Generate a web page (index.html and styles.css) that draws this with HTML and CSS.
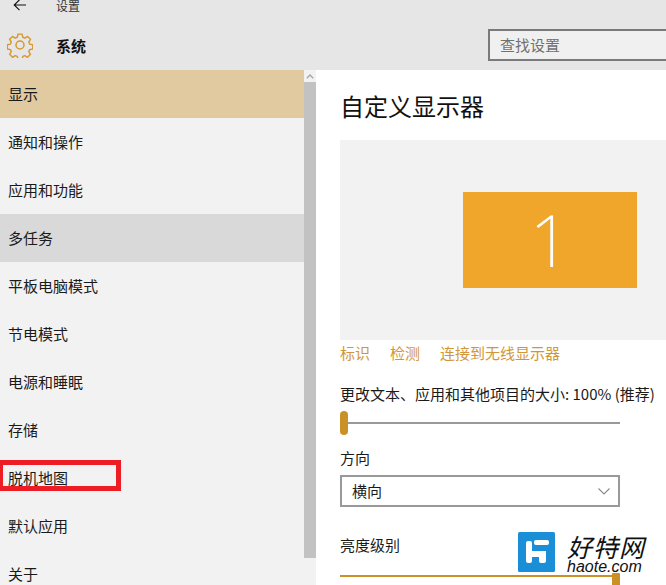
FILE: index.html
```html
<!DOCTYPE html>
<html lang="zh-CN">
<head>
    <meta charset="UTF-8">
    <meta name="viewport" content="width=device-width, initial-scale=1.0">
    <title>设置</title>
    <link rel="stylesheet" href="styles.css">
</head>
<body>
    <header class="header">
        <div class="titlebar">
            <svg class="back" width="14" height="12" viewBox="0 0 14 12"><path d="M13 6H1.500M6.500 .8 1.200 6l5.300 5.200" fill="none" stroke="#111" stroke-width="1.100"/></svg>
            <span class="app-name">设置</span>
        </div>
        <div class="section-bar">
            <svg class="gear" width="26" height="26" viewBox="0 0 26 26">
                <path d="M10.800 1.500h4.400l.7 3.300 2.200.9 2.800-1.800 3.100 3.100-1.800 2.800.9 2.200 3.300.7v4.400l-3.300.7-.9 2.200 1.800 2.800-3.100 3.100-2.800-1.800-2.200.9-.7 3.300h-4.400l-.7-3.300-2.200-.9-2.800 1.800-3.100-3.100 1.800-2.800-.9-2.200-3.300-.7v-4.400l3.300-.7.9-2.200-1.800-2.800 3.100-3.100 2.800 1.800 2.200-.9z" transform="translate(.7 .7) scale(.95)" fill="none" stroke="#d8982f" stroke-width="1.500" stroke-linejoin="round"/>
                <circle cx="13" cy="13" r="4" fill="none" stroke="#d8982f" stroke-width="1.500"/>
            </svg>
            <span class="section-name">系统</span>
            <div class="search">查找设置</div>
        </div>
    </header>

    <div class="content">
        <nav class="sidebar">
            <div class="nav-list">
                <div class="nav-item selected">显示</div>
                <div class="nav-item">通知和操作</div>
                <div class="nav-item">应用和功能</div>
                <div class="nav-item hover">多任务</div>
                <div class="nav-item">平板电脑模式</div>
                <div class="nav-item">节电模式</div>
                <div class="nav-item">电源和睡眠</div>
                <div class="nav-item">存储</div>
                <div class="nav-item marked">脱机地图</div>
                <div class="nav-item">默认应用</div>
                <div class="nav-item">关于</div>
            </div>
            <div class="scrollbar">
                <div class="scroll-arrow">
                    <svg width="8" height="5" viewBox="0 0 8 5"><path d="M.8 4.200 4 1l3.200 3.200" fill="none" stroke="#a6a6a6" stroke-width="1.300"/></svg>
                </div>
                <div class="scroll-thumb"></div>
            </div>
        </nav>

        <main class="main">
            <h1 class="page-title">自定义显示器</h1>
            <div class="preview">
                <div class="monitor">1</div>
            </div>
            <div class="links">
                <a>标识</a>
                <a>检测</a>
                <a>连接到无线显示器</a>
            </div>
            <div class="label scale-label">更改文本、应用和其他项目的大小: 100% (推荐)</div>
            <div class="slider">
                <div class="thumb round"></div>
            </div>
            <div class="label orient-label">方向</div>
            <div class="select">
                <span class="select-value">横向</span>
                <svg width="12" height="7" viewBox="0 0 12 7"><path d="M.5.5 6 6l5.500-5.500" fill="none" stroke="#8a8a8a" stroke-width="1.100"/></svg>
            </div>
            <div class="label bright-label">亮度级别</div>
            <div class="slider filled">
                <div class="thumb square"></div>
            </div>
        </main>
    </div>

    <div class="watermark">
        <svg width="37" height="40" viewBox="0 0 37 40">
            <rect width="37" height="40" rx="1.500" fill="#1a8fd8"/>
            <rect x="8" y="9" width="6" height="22" rx="2" fill="#fff"/>
            <rect x="8" y="19" width="20" height="6" fill="#fff"/>
            <rect x="21" y="19" width="7" height="12" rx="2" fill="#fff"/>
            <rect x="16" y="8" width="15" height="5" rx="2" fill="#fff"/>
        </svg>
        <div class="wm-text">
            <div class="wm-cn">好特网</div>
            <div class="wm-en">haote.com</div>
        </div>
    </div>
</body>
</html>
```

FILE: styles.css
```css
html, body {
    margin: 0;
    height: 585px;
    overflow: hidden;
}
body {
    font-family: "Noto Sans CJK SC", "Liberation Sans", sans-serif;
    font-size: 15px;
    color: #1a1a1a;
    background-color: #fff;
    position: relative;
}
.header {
    height: 70px;
    background-color: #e6e6e6;
    overflow: hidden;
}
.titlebar {
    height: 24px;
    margin-top: -7px;
    display: flex;
    align-items: center;
    font-size: 12px;
}
.back {
    margin-left: 13px;
}
.app-name {
    margin-left: 29px;
    color: #333;
}
.section-bar {
    height: 46px;
    display: flex;
    align-items: center;
    padding-top: 9px;
    box-sizing: border-box;
}
.gear {
    margin-left: 7px;
}
.section-name {
    margin-left: 23px;
    margin-top: 2px;
    font-weight: bold;
    color: #111;
}
.search {
    margin-left: auto;
    width: 178px;
    height: 32px;
    box-sizing: border-box;
    border: 2px solid #7a7a7a;
    border-right: none;
    background-color: #f0f0f0;
    color: #707070;
    line-height: 28px;
    padding-left: 10px;
}
.content {
    display: flex;
    height: 515px;
}
.sidebar {
    width: 316px;
    display: flex;
    flex-shrink: 0;
}
.nav-list {
    width: 304px;
    background-color: #f2f2f2;
}
.nav-item {
    height: 48px;
    line-height: 47px;
    padding-left: 8px;
}
.nav-item.selected {
    background-color: #e2caa0;
}
.nav-item.hover {
    background-color: #d9d9d9;
}
.nav-item.marked {
    position: relative;
}
/* red annotation box, drawn on top of the row */
.nav-item.marked::after {
    content: "";
    position: absolute;
    left: 0;
    top: 6px;
    width: 121px;
    height: 31px;
    box-sizing: border-box;
    border: 5px solid #ee1c25;
    border-left-width: 3px;
}
.scrollbar {
    width: 12px;
    background-color: #f2f2f2;
}
.scroll-arrow {
    height: 12px;
    display: flex;
    align-items: center;
    justify-content: center;
}
.scroll-thumb {
    height: 476px;
    background-color: #c2c2c2;
}
.main {
    flex: 1;
    padding-left: 24px;
    min-width: 0;
}
.page-title {
    margin: 0;
    font-size: 24px;
    font-weight: normal;
    line-height: 34px;
    padding-top: 19px;
    color: #111;
}
.preview {
    margin-top: 17px;
    height: 200px;
    background-color: #f2f2f2;
    padding: 52px 0 0 123px;
    box-sizing: border-box;
}
.monitor {
    width: 174px;
    height: 96px;
    background-color: #f0a62a;
    color: #fff;
    font-family: "Noto Sans", sans-serif;
    font-weight: 200;
    font-size: 72px;
    line-height: 94px;
    text-align: center;
}
.links {
    display: flex;
    gap: 20px;
    margin-top: 3px;
    line-height: 20px;
    color: #d0973a;
}
.label {
    line-height: 20px;
    white-space: nowrap;
}
.scale-label {
    margin-top: 21px;
}
.slider {
    position: relative;
    width: 280px;
    height: 2px;
    background-color: #999;
    margin-top: 18px;
}
.thumb {
    position: absolute;
    background-color: #cc9028;
}
.thumb.round {
    left: 0;
    top: -11px;
    width: 8px;
    height: 24px;
    border-radius: 4px;
}
.orient-label {
    margin-top: 24px;
}
.select {
    width: 280px;
    height: 32px;
    box-sizing: border-box;
    border: 2px solid #999;
    margin-top: 7px;
    padding: 0 8px 0 10px;
    display: flex;
    align-items: center;
    justify-content: space-between;
}
.select-value {
    padding-bottom: 2px;
}
.bright-label {
    margin-top: 28px;
}
.slider.filled {
    background-color: #cc9028;
    margin-top: 20px;
}
.thumb.square {
    right: 0;
    top: -2px;
    width: 8px;
    height: 14px;
    border-radius: 1px;
}
.watermark {
    position: absolute;
    left: 518px;
    top: 532px;
    display: flex;
    align-items: flex-start;
    gap: 12px;
}
.wm-text {
    color: #111;
}
.wm-cn {
    font-size: 25px;
    line-height: 28px;
    font-style: italic;
    letter-spacing: 1px;
    white-space: nowrap;
}
.wm-en {
    font-family: "Liberation Sans", sans-serif;
    font-style: italic;
    font-size: 16px;
    line-height: 14px;
    white-space: nowrap;
}
```
